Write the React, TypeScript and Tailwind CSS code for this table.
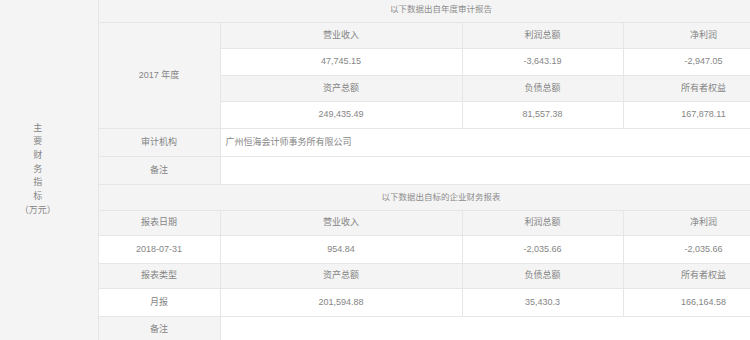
import React from 'react';

const gray = 'bg-[#f4f4f4]';
const cell = 'border border-[#e6e6e6] p-0 text-center align-middle';

type Row = string[];

function LabelRow({ cells, h, first }: { cells: Row; h: string; first?: React.ReactNode }) {
    return (
        <tr className={h}>
            {first}
            {cells.map((c, i) => (
                <td key={i} className={`${cell} ${gray}`}>{c}</td>
            ))}
        </tr>
    );
}

function ValueRow({ cells, h, first }: { cells: Row; h: string; first?: React.ReactNode }) {
    return (
        <tr className={h}>
            {first}
            {cells.map((c, i) => (
                <td key={i} className={`${cell} bg-white`}>{c}</td>
            ))}
        </tr>
    );
}

export default function App() {
    const side = ['主', '要', '财', '务', '指', '标'];

    return (
        <div className="w-[750px] h-[340px] overflow-hidden bg-white text-[#858585] text-[9px] [font-family:'Liberation_Sans','Noto_Sans_CJK_SC',sans-serif]">
            <table className="table-fixed border-collapse w-[784px] -mt-[4px]">
                <colgroup>
                    <col className="w-[98px]" />
                    <col className="w-[122px]" />
                    <col className="w-[242px]" />
                    <col className="w-[161px]" />
                    <col className="w-[161px]" />
                </colgroup>
                <tbody>
                    <tr className="h-[26px]">
                        <td rowSpan={13} className={`${cell} ${gray} border-l-0`}>
                            <div className="flex flex-col items-center pr-[22px] leading-[13.7px] text-[9px]">
                                {side.map((s) => (
                                    <span key={s}>{s}</span>
                                ))}
                                <span>（万元）</span>
                            </div>
                        </td>
                        <td colSpan={4} className={`${cell} ${gray} text-[8.5px] text-[#8e8e8e]`}>
                            以下数据出自年度审计报告
                        </td>
                    </tr>
                    <LabelRow
                        h="h-[26px]"
                        cells={['营业收入', '利润总额', '净利润']}
                        first={
                            <td rowSpan={4} className={`${cell} ${gray}`}>
                                2017 年度
                            </td>
                        }
                    />
                    <ValueRow h="h-[27px]" cells={['47,745.15', '-3,643.19', '-2,947.05']} />
                    <LabelRow h="h-[26px]" cells={['资产总额', '负债总额', '所有者权益']} />
                    <ValueRow h="h-[27px]" cells={['249,435.49', '81,557.38', '167,878.11']} />
                    <tr className="h-[28px]">
                        <td className={`${cell} ${gray}`}>审计机构</td>
                        <td colSpan={3} className={`${cell} bg-white text-left pl-[5px]`}>
                            广州恒海会计师事务所有限公司
                        </td>
                    </tr>
                    <tr className="h-[28px]">
                        <td className={`${cell} ${gray}`}>备注</td>
                        <td colSpan={3} className={`${cell} bg-white`} />
                    </tr>
                    <tr className="h-[26px]">
                        <td colSpan={4} className={`${cell} ${gray} text-[8.5px] text-[#8e8e8e]`}>
                            以下数据出自标的企业财务报表
                        </td>
                    </tr>
                    <LabelRow h="h-[25px]" cells={['报表日期', '营业收入', '利润总额', '净利润']} />
                    <ValueRow h="h-[28px]" cells={['2018-07-31', '954.84', '-2,035.66', '-2,035.66']} />
                    <LabelRow h="h-[25px]" cells={['报表类型', '资产总额', '负债总额', '所有者权益']} />
                    <ValueRow h="h-[28px]" cells={['月报', '201,594.88', '35,430.3', '166,164.58']} />
                    <tr className="h-[26px]">
                        <td className={`${cell} ${gray}`}>备注</td>
                        <td colSpan={3} className={`${cell} bg-white`} />
                    </tr>
                </tbody>
            </table>
        </div>
    );
}
